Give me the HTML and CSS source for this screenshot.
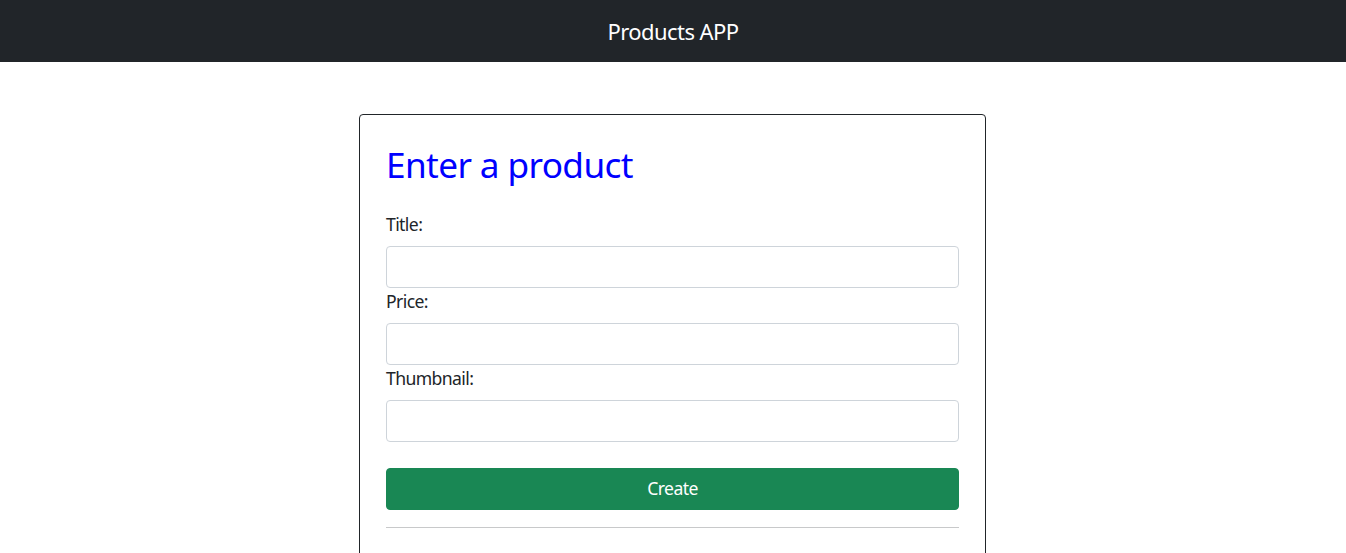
FILE: index.html
```html
<!DOCTYPE html>
<html lang="en">
<head>
<meta charset="utf-8">
<title>Products APP</title>
<link rel="stylesheet" href="styles.css">
</head>
<body>
<nav class="navbar">
  <span class="brand">Products APP</span>
</nav>
<main class="container">
  <section class="card">
    <h2 class="card-title">Enter a product</h2>
    <form class="form">
      <label class="form-label" for="title">Title:</label>
      <input class="form-control" id="title" type="text">
      <label class="form-label" for="price">Price:</label>
      <input class="form-control" id="price" type="text">
      <label class="form-label" for="thumb">Thumbnail:</label>
      <input class="form-control" id="thumb" type="text">
      <button class="btn" type="button">Create</button>
    </form>
    <hr class="divider">
  </section>
</main>
</body>
</html>
```
FILE: styles.css
```css
* { box-sizing: border-box; }
html, body { margin: 0; padding: 0; }
body {
  font-family: "Noto Sans", "Open Sans", sans-serif;
  font-size: 17.6px;
  line-height: 1.5;
  color: #212529;
  background: #fff;
}
.navbar {
  height: 62px;
  background: #212529;
  display: flex;
  align-items: center;
  justify-content: center;
}
.brand {
  color: #fff;
  font-size: 22px;
  line-height: 33px;
  letter-spacing: -0.55px;
}
.container {
  display: flex;
  justify-content: center;
  padding: 52px 1px 0 0;
}
.card {
  width: 627px;
  border: 1px solid #212529;
  border-radius: 4px;
  padding: 28px 26px 60px;
}
.card-title {
  margin: 0 0 26px;
  font-size: 35.2px;
  line-height: 1.2;
  font-weight: 400;
  letter-spacing: -0.62px;
  color: #0000ff;
}
.form { display: flex; flex-direction: column; }
.form-label {
  display: block;
  line-height: 26.4px;
  margin-bottom: 8.8px;
  letter-spacing: -0.6px;
}
.form-control {
  display: block;
  width: 100%;
  height: 41.8px;
  padding: 6px 13px;
  font: inherit;
  border: 1px solid #ced4da;
  border-radius: 4px;
  background: #fff;
  margin: 0;
}
.btn {
  margin-top: 26.2px;
  width: 100%;
  height: 42px;
  border: 1px solid #198754;
  border-radius: 4px;
  background: #198754;
  color: #fff;
  font: inherit;
  letter-spacing: -0.6px;
  line-height: 26.4px;
  padding: 5px 13px 7px;
}
.divider {
  margin: 17px 0 0;
  border: 0;
  border-top: 1px solid #c8c9ca;
}
```
